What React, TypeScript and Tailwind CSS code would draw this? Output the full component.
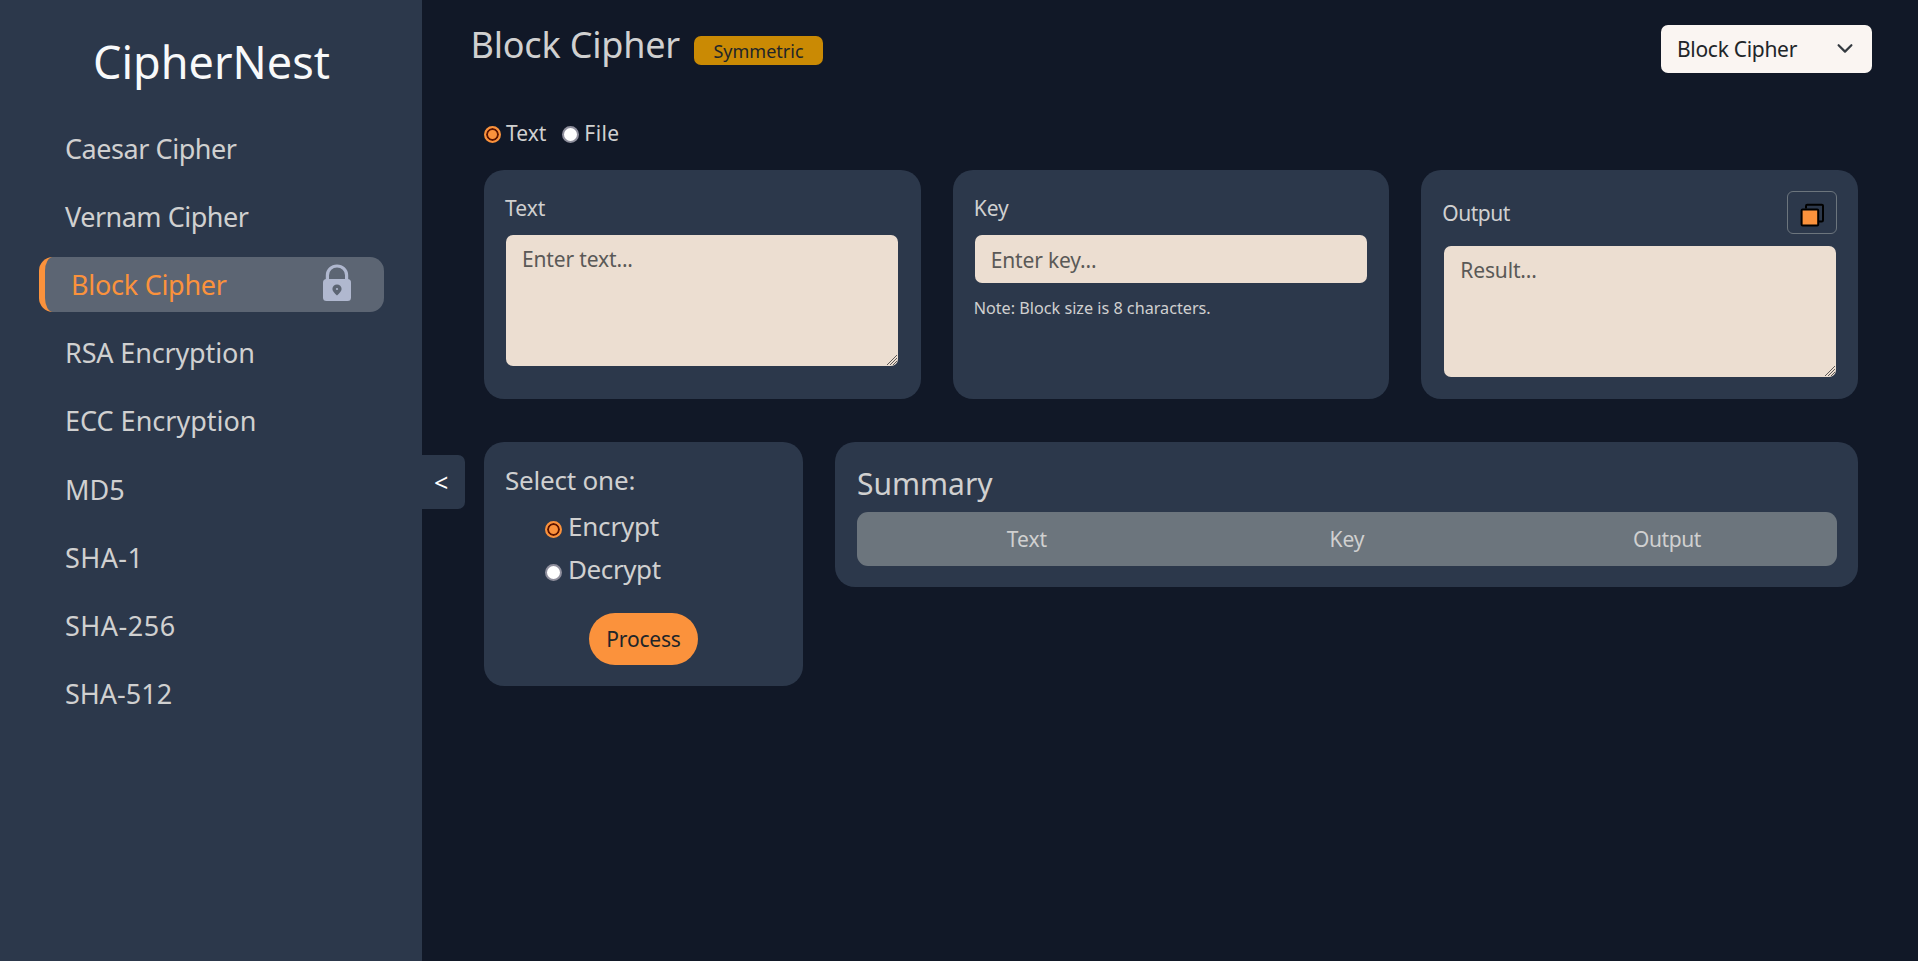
import type { ReactNode } from "react";

type NavItem = { label: string; tracking: string; active?: boolean };

const navItems: NavItem[] = [
  { label: "Caesar Cipher", tracking: "tracking-[-0.45px]" },
  { label: "Vernam Cipher", tracking: "tracking-[-0.5px]" },
  { label: "Block Cipher", tracking: "tracking-[-0.27px]", active: true },
  { label: "RSA Encryption", tracking: "tracking-[-0.15px]" },
  { label: "ECC Encryption", tracking: "tracking-[0px]" },
  { label: "MD5", tracking: "tracking-[0px]" },
  { label: "SHA-1", tracking: "tracking-[0.4px]" },
  { label: "SHA-256", tracking: "tracking-[0.5px]" },
  { label: "SHA-512", tracking: "tracking-[0px]" },
];

function LockIcon() {
  return (
    <svg width="30" height="38" viewBox="0 0 30 38" className="block">
      <path d="M5.4 17V11.2a9.6 9.2 0 0 1 19.2 0V17" fill="none" stroke="#b0b8cf" strokeWidth="3.2" />
      <rect x="1" y="15" width="28" height="22" rx="3.5" fill="#b0b8cf" />
      <path d="M15 20.4a4.6 4.6 0 0 0-4.6 4.6c0 2.6 2.4 4.2 4.6 6.6 2.2-2.4 4.6-4 4.6-6.6a4.6 4.6 0 0 0-4.6-4.6Z" fill="#5c6573" />
      <circle cx="15" cy="25" r="1.1" fill="#b0b8cf" />
    </svg>
  );
}

function CopyIcon() {
  return (
    <svg width="24" height="24" viewBox="0 0 24 24" className="block">
      <path
        d="M6 5.6V3a1.3 1.3 0 0 1 1.3-1.3h14.4A1.3 1.3 0 0 1 23 3v14.2a1.3 1.3 0 0 1-1.3 1.3H19"
        fill="none"
        stroke="#000"
        strokeWidth="2"
      />
      <rect x="1.6" y="6.4" width="16.6" height="16.2" rx="1" fill="#fb923c" stroke="#000" strokeWidth="2" />
    </svg>
  );
}

function Radio({ name, checked }: { name: string; checked?: boolean }) {
  return (
    <input
      type="radio"
      name={name}
      defaultChecked={checked}
      className="m-0 block size-[17px] shrink-0 appearance-none rounded-full border-2 border-[#8f8f9d] bg-white checked:border-[#fb923c] checked:bg-[#fb923c] checked:shadow-[inset_0_0_0_2px_#5c1500]"
    />
  );
}

function Card({ className, children }: { className: string; children: ReactNode }) {
  return <section className={`rounded-[20px] bg-[#2c384b] ${className}`}>{children}</section>;
}

function TextBox({ placeholder }: { placeholder: string }) {
  return (
    <div className="relative h-[131px] w-[392px] overflow-hidden rounded-[7px]">
      <textarea
        placeholder={placeholder}
        className="block h-full w-full resize-none bg-[#ecded1] px-4 py-2 leading-[32px] tracking-[-0.15px] text-[#212529] outline-none placeholder:text-[#5a5957]"
      />
      <svg width="12" height="12" viewBox="0 0 12 12" className="absolute right-0 bottom-0">
        <path d="M1 11 11 1M4 11l7-7M7 11l4-4" stroke="#5d5a58" strokeWidth="1" fill="none" />
        <path d="M9 12l3-3v3z" fill="#2c384b" />
      </svg>
    </div>
  );
}

export default function App() {
  return (
    <div className="flex h-[961px] w-full overflow-hidden bg-[#111827] font-['Noto_Sans',sans-serif] text-[21px] text-[#d0d0d0]">
      <aside className="h-full w-[422px] shrink-0 bg-[#2c384b] pt-[32px]">
        <h1 className="pl-px text-center text-[45px] leading-[60px] text-[#f8f9fa]">CipherNest</h1>
        <nav className="mt-[28.7px] ml-[39px] flex w-[345px] flex-col gap-[13.2px]">
          {navItems.map((item) => (
            <a
              key={item.label}
              className={
                item.active
                  ? "flex h-[55px] items-center justify-between rounded-[14px] border-l-[6px] border-[#fb923c] bg-[#5c6573] pr-8 pl-[26px] text-[27px] text-[#fb923c]"
                  : "flex h-[55px] items-center pl-[26px] text-[27px]"
              }
            >
              <span className={`pt-[1.4px] ${item.tracking}`}>{item.label}</span>
              {item.active && (
                <span className="-mt-[4px]">
                  <LockIcon />
                </span>
              )}
            </a>
          ))}
        </nav>
      </aside>

      <button className="mt-[455px] flex h-[54px] w-[43px] shrink-0 items-center rounded-r-[7px] bg-[#2c384b] pl-3 text-[25px] leading-none text-white">
        &lt;
      </button>

      <main className="flex-1 pl-[19px]">
        <header className="flex h-[73px] pt-[25px] pr-[46px]">
          <h2 className="-mt-1 ml-[-13.5px] w-[208px] text-[36px] leading-[48px] tracking-[-0.2px] whitespace-nowrap">Block Cipher</h2>
          <span className="mt-[11px] ml-[15.5px] flex h-[29px] w-[129px] items-center justify-center rounded-[7px] bg-[#ca8a04] pt-px text-[18px] leading-none text-[#212529]">
            Symmetric
          </span>
          <button className="ml-auto flex h-[48px] w-[211px] items-center justify-between rounded-[7px] bg-[#faf5f2] pr-[19px] pl-4 tracking-[-0.3px] text-[#212529]">
            <span className="pt-0.5">Block Cipher</span>
            <svg width="16" height="16" viewBox="0 0 16 16">
              <path d="m1.6 4.2 6.4 6.4 6.4-6.4" fill="none" stroke="#343a40" strokeWidth="2.2" strokeLinecap="round" strokeLinejoin="round" />
            </svg>
          </button>
        </header>

        <div className="w-[1374px]">
          <div className="mt-[45px] flex h-[32px] items-center">
            <label className="flex items-center gap-[5px]">
              <Radio name="source" checked />
              <span>Text</span>
            </label>
            <label className="ml-4 flex items-center gap-[5px]">
              <Radio name="source" />
              <span className="tracking-[0.4px]">File</span>
            </label>
          </div>

          <div className="mt-5 grid grid-cols-3 gap-8">
            <Card className="h-[229px] pt-[23px] pl-[22px]">
              <h3 className="mb-3 -ml-px leading-[30px]">Text</h3>
              <TextBox placeholder="Enter text..." />
            </Card>
            <Card className="h-[229px] pt-[23px] pl-[22px]">
              <h3 className="mb-3 -ml-px leading-[30px]">Key</h3>
              <input
                placeholder="Enter key..."
                className="block h-[48px] w-[392px] rounded-[7px] bg-[#ecded1] px-4 pt-px tracking-[-0.15px] text-[#212529] outline-none placeholder:text-[#5a5957]"
              />
              <p className="mt-[13px] -ml-px text-[16.2px] leading-6">Note: Block size is 8 characters.</p>
            </Card>
            <Card className="h-[229px] pt-[21px] pl-[23px]">
              <div className="mb-3 -ml-[2px] flex h-[43px] w-[395px] items-center justify-between">
                <h3 className="pt-0.5 tracking-[-0.5px]">Output</h3>
                <button className="flex h-[43px] w-[50px] items-center justify-center rounded-[6px] border border-[#6c757d] pt-[4px]">
                  <CopyIcon />
                </button>
              </div>
              <TextBox placeholder="Result..." />
            </Card>
          </div>

          <div className="mt-[43px] flex items-start gap-8">
            <Card className="flex h-[244px] w-[319px] flex-col px-[21px] pt-[19px]">
              <h3 className="text-[26px] leading-[38px] tracking-[-0.2px]">Select one:</h3>
              <div className="ml-10 flex flex-col pt-[3px] text-[26px]">
                <label className="mt-[8px] flex h-[35px] items-center gap-1.5">
                  <span className="mt-1">
                    <Radio name="mode" checked />
                  </span>
                  <span className="-mt-[3px] tracking-[-0.2px]">Encrypt</span>
                </label>
                <label className="mt-[8px] flex h-[35px] items-center gap-1.5">
                  <span className="mt-1">
                    <Radio name="mode" />
                  </span>
                  <span className="-mt-[3px] tracking-[-0.4px]">Decrypt</span>
                </label>
              </div>
              <button className="mt-[25px] h-[52px] w-[109px] self-center rounded-full bg-[#fb923c] pt-0.5 tracking-[-0.2px] text-[#212529]">
                Process
              </button>
            </Card>
            <Card className="h-[145px] flex-1 px-[21px] pt-[20px]">
              <h3 className="pl-px text-[30px] leading-[44px]">Summary</h3>
              <div className="mt-1.5 ml-px grid h-[54px] w-[980px] grid-cols-[340px_300px_340px] items-center rounded-[11px] bg-[#6c757d] pt-0.5 text-center">
                <span>Text</span>
                <span>Key</span>
                <span className="tracking-[-0.4px]">Output</span>
              </div>
            </Card>
          </div>
        </div>
      </main>
    </div>
  );
}
